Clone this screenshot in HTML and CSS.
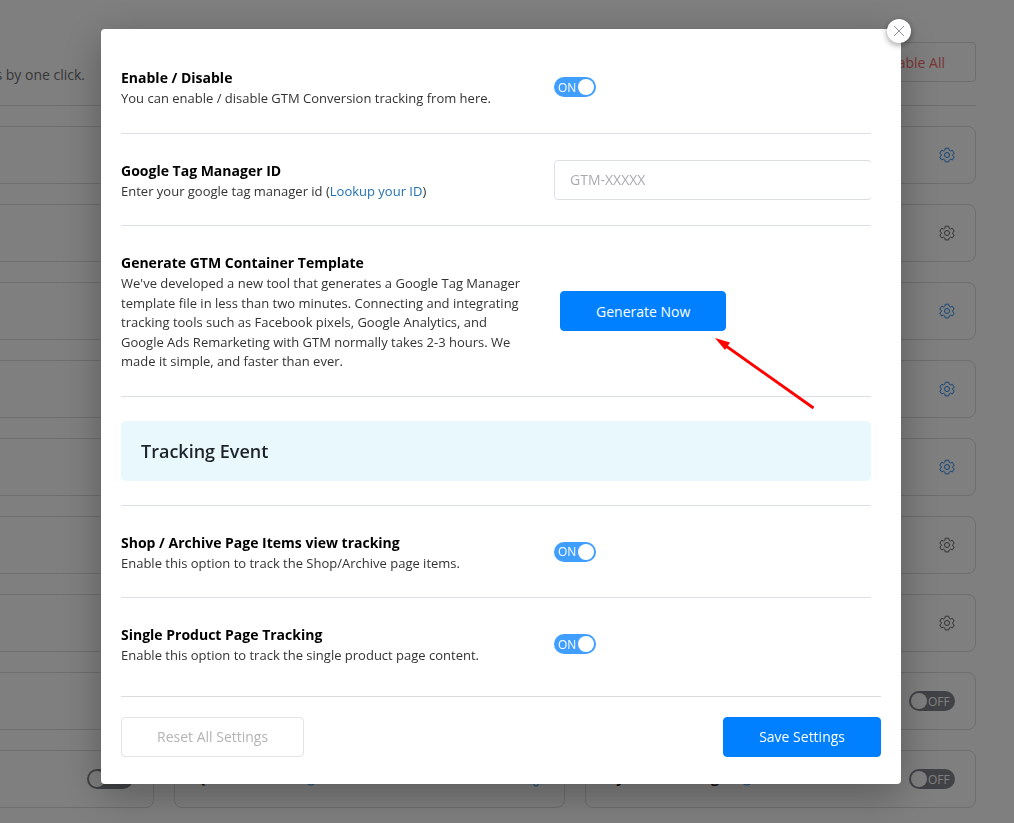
FILE: index.html
```
<!DOCTYPE html>
<html lang="en">
<head>
  <meta charset="UTF-8">
  <meta name="viewport" content="width=device-width, initial-scale=1.0">
  <title>Conversion Tracking Settings</title>
  <link rel="stylesheet" href="styles.css">
</head>
<body>
<svg class="sprite" aria-hidden="true">
  <symbol id="gear" viewBox="0 0 16 16">
    <path d="M6.3 1.2h3.4l.5 2 1.3.8 2-.7 1.7 3-1.5 1.1v1.3l1.5 1.2-1.7 3-2-.7-1.3.8-.5 1.9H6.3l-.5-1.9-1.3-.8-2 .7-1.7-3 1.5-1.2V7.4L.8 6.3l1.7-3 2 .7 1.3-.8z"/>
    <circle cx="8" cy="8" r="2.5"/>
  </symbol>
  <symbol id="help" viewBox="0 0 16 16">
    <circle cx="8" cy="8" r="6"/>
    <path d="M6.3 6.5a1.7 1.7 0 1 1 2.5 1.5q-.8.5-.8 1.3M8 10.5v1"/>
  </symbol>
</svg>

<main class="page">
  <div class="page-head">
    <p>Enable or disable all modules by one click.</p>
    <button class="disable-all" type="button">Disable All</button>
  </div>
  <div class="modules">
    <div class="card"></div><div class="card"></div>
    <div class="card"><button class="gear blue" aria-label="Settings"><svg><use href="#gear"/></svg></button></div>
    <div class="card"></div><div class="card"></div>
    <div class="card"><button class="gear" aria-label="Settings"><svg><use href="#gear"/></svg></button></div>
    <div class="card"></div><div class="card"></div>
    <div class="card"><button class="gear blue" aria-label="Settings"><svg><use href="#gear"/></svg></button></div>
    <div class="card"></div><div class="card"></div>
    <div class="card"><button class="gear blue" aria-label="Settings"><svg><use href="#gear"/></svg></button></div>
    <div class="card"></div><div class="card"></div>
    <div class="card"><button class="gear blue" aria-label="Settings"><svg><use href="#gear"/></svg></button></div>
    <div class="card"></div><div class="card"></div>
    <div class="card"><button class="gear" aria-label="Settings"><svg><use href="#gear"/></svg></button></div>
    <div class="card"></div><div class="card"></div>
    <div class="card"><button class="gear" aria-label="Settings"><svg><use href="#gear"/></svg></button></div>
    <div class="card"></div><div class="card"></div>
    <div class="card"><label class="switch off"><input type="checkbox"><span>OFF</span></label></div>
    <div class="card"><label class="switch off"><input type="checkbox"><span>OFF</span></label></div>
    <div class="card">
      <span class="card-title"><span>Quick Filters</span> <svg><use href="#help"/></svg></span>
      <button class="gear blue" aria-label="Settings"><svg><use href="#gear"/></svg></button>
    </div>
    <div class="card">
      <span class="card-title"><span>Dynamic Pricing</span> <svg><use href="#help"/></svg></span>
      <label class="switch off"><input type="checkbox"><span>OFF</span></label>
    </div>
  </div>
</main>

<div class="overlay">
  <div class="modal" role="dialog" aria-label="Conversion tracking settings">
    <button class="close" type="button" aria-label="Close">
      <svg viewBox="0 0 12 12"><path d="M1 1l10 10M11 1L1 11"/></svg>
    </button>

    <div class="settings">
      <div class="row">
        <div class="info">
          <h4>Enable / Disable</h4>
          <p>You can enable / disable GTM Conversion tracking from here.</p>
        </div>
        <div class="field">
          <label class="switch on"><input type="checkbox" checked aria-label="Enable / Disable"><span>ON</span></label>
        </div>
      </div>

      <div class="row">
        <div class="info">
          <h4><label for="gtm-id">Google Tag Manager ID</label></h4>
          <p>Enter your google tag manager id (<a href="#">Lookup your ID</a>)</p>
        </div>
        <div class="field">
          <input class="text-input" id="gtm-id" type="text" placeholder="GTM-XXXXX">
        </div>
      </div>

      <div class="row">
        <div class="info">
          <h4>Generate GTM Container Template</h4>
          <p>We've developed a new tool that generates a Google Tag Manager template file in less than two minutes. Connecting and integrating tracking tools such as Facebook pixels, Google Analytics, and Google Ads Remarketing with GTM normally takes 2-3 hours. We made it simple, and faster than ever.</p>
        </div>
        <div class="field generate">
          <button class="btn primary" type="button">Generate Now</button>
          <svg class="arrow" viewBox="0 0 100 72" aria-hidden="true">
            <path class="shaft" d="M98.500 70L11 8"/>
            <path class="head" d="M0 0l15 4.500-5 7.500z"/>
          </svg>
        </div>
      </div>

      <div class="section">
        <h3>Tracking Event</h3>
      </div>

      <div class="row">
        <div class="info">
          <h4>Shop / Archive Page Items view tracking</h4>
          <p>Enable this option to track the Shop/Archive page items.</p>
        </div>
        <div class="field">
          <label class="switch on"><input type="checkbox" checked aria-label="Shop / Archive Page Items view tracking"><span>ON</span></label>
        </div>
      </div>

      <div class="row">
        <div class="info">
          <h4>Single Product Page Tracking</h4>
          <p>Enable this option to track the single product page content.</p>
        </div>
        <div class="field">
          <label class="switch on"><input type="checkbox" checked aria-label="Single Product Page Tracking"><span>ON</span></label>
        </div>
      </div>
    </div>

    <div class="modal-foot">
      <button class="btn reset" type="button">Reset All Settings</button>
      <button class="btn primary" type="button">Save Settings</button>
    </div>
  </div>
</div>
</body>
</html>
```

FILE: styles.css
```
* {
  box-sizing: border-box;
}
body {
  margin: 0;
  height: 100vh;
  overflow: hidden;
  background: #fff;
  font-family: "Open Sans", sans-serif;
  font-size: 14px;
  color: #333;
}
h3, h4, p {
  margin: 0;
}
button {
  font: inherit;
  cursor: pointer;
}
.sprite {
  display: none;
}

/* page behind the dialog, scrolled to the right */
.page {
  margin: 0 38px 0 -237px;
  padding-top: 42px;
}
.page-head {
  display: flex;
  justify-content: space-between;
  height: 64px;
  margin-bottom: 20px;
  padding-left: 24px;
  border-bottom: 1px solid #dcdcdc;
}
.page-head p {
  width: 298px;
  line-height: 66px;
  text-align: right;
  white-space: nowrap;
  color: #6e6e6e;
}
.disable-all {
  height: 40px;
  padding: 0 30px;
  border: 1px solid #dcdcdc;
  border-radius: 4px;
  background: none;
  color: #f56c6c;
}
.modules {
  display: grid;
  grid-template-columns: repeat(3, 1fr);
  gap: 20px;
}
.card {
  display: flex;
  align-items: center;
  height: 58px;
  padding: 0 20px;
  border: 1px solid #dcdcdc;
  border-radius: 8px;
}
.card > :last-child {
  margin-left: auto;
}
.card-title {
  display: flex;
  align-items: center;
  gap: 20px;
  font-weight: 700;
  color: #222;
}
.card-title span {
  padding-bottom: 3px;
}
.card-title svg {
  width: 16px;
  height: 16px;
  fill: none;
  stroke: #2b8cec;
}
.gear {
  display: flex;
  padding: 0;
  border: 0;
  background: none;
  color: #666;
}
.gear svg {
  width: 16px;
  height: 16px;
  fill: none;
  stroke: currentColor;
}
.gear.blue {
  color: #2b8cec;
}

.switch {
  display: flex;
  align-items: center;
  height: 20px;
  padding: 0 2px;
  border-radius: 10px;
  color: #fff;
  font-size: 12px;
  cursor: pointer;
}
.switch input {
  appearance: none;
  flex: none;
  width: 16px;
  height: 16px;
  margin: 0;
  border-radius: 50%;
  background: #fff;
}
.switch.on {
  flex-direction: row-reverse;
  justify-content: space-between;
  width: 42px;
  padding-left: 4px;
  background: #409eff;
}
.switch.off {
  width: 46px;
  gap: 1px;
  background: #82848a;
}

/* dialog */
.overlay {
  position: fixed;
  inset: 0;
  display: flex;
  align-items: flex-start;
  justify-content: center;
  padding: 29px 12px 0 0;
  background: rgba(0, 0, 0, .5);
}
.modal {
  position: relative;
  width: 800px;
  max-width: 100%;
  padding: 12px 20px 27px;
  border-radius: 4px;
  background: #fff;
  box-shadow: 0 10px 40px rgba(0, 0, 0, .3);
}
.close {
  position: absolute;
  top: -10px;
  right: -10px;
  display: flex;
  align-items: center;
  justify-content: center;
  width: 24px;
  height: 24px;
  padding: 0;
  border: 0;
  border-radius: 50%;
  background: #fff;
  box-shadow: 0 2px 6px rgba(0, 0, 0, .4);
}
.close svg {
  width: 12px;
  height: 12px;
  stroke: #909399;
}
.settings {
  margin: 0 10px 6px 0;
}
.row {
  display: flex;
  align-items: center;
  padding: 25px 0 24px;
  border-bottom: 1px solid #dcdfe6;
}
.row:last-child {
  border-bottom: 0;
}
.info {
  flex: 0 0 433px;
  padding-right: 28px;
  font-size: 13px;
  line-height: 1.5;
}
.info h4 {
  font-size: 14px;
  line-height: 23px;
  color: #000;
}
.info a {
  color: #2271b1;
  text-decoration: none;
}
.field {
  flex: 1;
  overflow: hidden;
}
.text-input {
  display: block;
  width: calc(100% + 1px);
  height: 40px;
  padding: 0 15px;
  border: 1px solid #dcdfe6;
  border-radius: 4px;
  font: inherit;
}
.text-input::placeholder {
  color: #a9abb0;
}
.generate {
  position: relative;
  padding-left: 6px;
  overflow: visible;
}
.arrow {
  position: absolute;
  top: 47px;
  left: 161px;
  width: 100px;
  height: 72px;
}
.arrow .shaft {
  stroke: #f00;
  stroke-width: 2.8;
}
.arrow .head {
  fill: #f00;
}
.section {
  padding: 24px 0;
  border-bottom: 1px solid #dcdfe6;
}
.section h3 {
  padding: 0 20px;
  border-radius: 5px;
  background: #e9f8fd;
  color: #1d2327;
  font-size: 18px;
  font-weight: 600;
  line-height: 60px;
}
.modal-foot {
  display: flex;
  justify-content: space-between;
  padding-top: 20px;
  border-top: 1px solid #dcdcdc;
}
.btn {
  height: 40px;
  padding: 0 35px;
  border: 1px solid #007fff;
  border-radius: 4px;
}
.primary {
  background: #007fff;
  color: #fff;
}
.reset {
  border-color: #e4e4e4;
  background: #fff;
  color: #b4b4b4;
}
```
